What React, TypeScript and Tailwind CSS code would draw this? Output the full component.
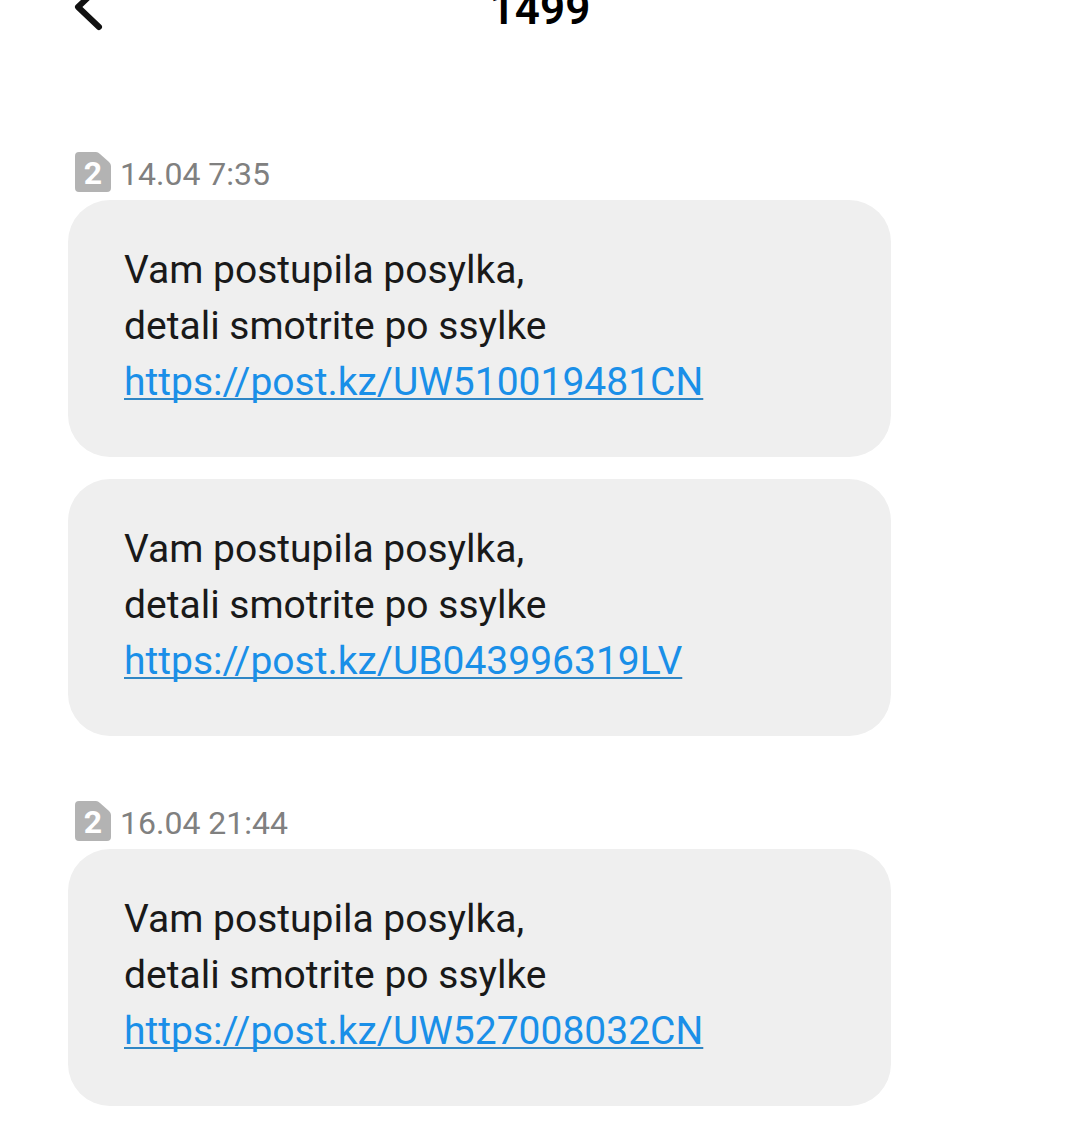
type Message = { id: string; url: string };
type Group = { time: string; messages: Message[] };

const groups: Group[] = [
  {
    time: '14.04 7:35',
    messages: [
      { id: 'm1', url: 'https://post.kz/UW510019481CN' },
      { id: 'm2', url: 'https://post.kz/UB043996319LV' },
    ],
  },
  {
    time: '16.04 21:44',
    messages: [{ id: 'm3', url: 'https://post.kz/UW527008032CN' }],
  },
];

function SimBadge() {
  return (
    <span className="relative flex h-10 w-9 items-center justify-center pt-0.5">
      <svg className="absolute inset-0" width="36" height="40" viewBox="0 0 36 40" aria-hidden="true">
        <path d="M4 0H21Q23 0 25 2L34 10Q36 12 36 14V36Q36 40 32 40H4Q0 40 0 36V4Q0 0 4 0Z" fill="#b3b3b3" />
      </svg>
      <span className="relative text-[32px] leading-10 font-bold text-white">2</span>
    </span>
  );
}

function Bubble({ url }: { url: string }) {
  return (
    <div className="rounded-[42px] bg-[#efefef] px-14 pt-[42px] pb-[47px] text-[39px] leading-[56px] text-[#191919]">
      <p>Vam postupila posylka,</p>
      <p>detali smotrite po ssylke</p>
      <a
        href={url}
        className="text-[#1a8fe8] underline decoration-[#2f86c4] decoration-2 underline-offset-3 [text-decoration-skip-ink:none]"
      >
        {url}
      </a>
    </div>
  );
}

export default function App() {
  return (
    <div className="min-h-screen overflow-hidden bg-white font-['Roboto',sans-serif]">
      {/* the bar is scrolled partly out of view */}
      <header className="grid h-10 grid-cols-3 grid-rows-[40px] items-end px-[74px]">
        <button type="button" aria-label="Back" className="h-10 w-8">
          <svg width="32" height="40" viewBox="0 0 32 40" fill="none" aria-hidden="true">
            <path d="M25 -13L4 7L25 27" stroke="#111" strokeWidth="6" strokeLinecap="round" strokeLinejoin="round" />
          </svg>
        </button>
        <h1 className="text-center text-[44px] leading-[62px] font-semibold text-black">1499</h1>
      </header>
      <main className="flex flex-col gap-[65px] pt-28 pr-[189px] pb-8 pl-[68px]">
        {groups.map((group) => (
          <section key={group.time}>
            <div className="mb-2 flex h-10 items-center gap-[9px] pl-[7px]">
              <SimBadge />
              <time className="pt-1 text-[32px] leading-10 text-[#808080]">{group.time}</time>
            </div>
            <div className="flex flex-col gap-[22px]">
              {group.messages.map((m) => (
                <Bubble key={m.id} url={m.url} />
              ))}
            </div>
          </section>
        ))}
      </main>
    </div>
  );
}
